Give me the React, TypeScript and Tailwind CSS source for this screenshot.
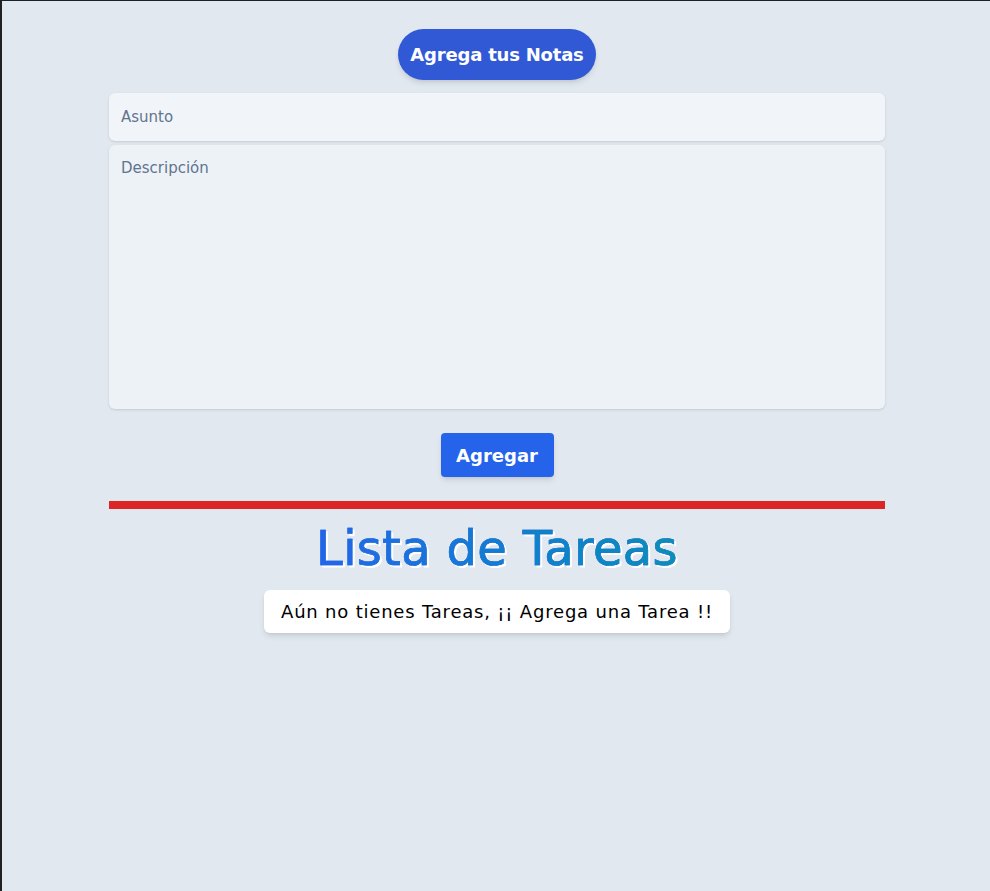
export default function App() {
  return (
    <div
      className="min-h-screen bg-[#e2e8f0] border-l-2 border-t border-[#202124] pl-[2px] flex flex-col items-center"
      style={{ fontFamily: '"DejaVu Sans", sans-serif' }}
    >
      <div className="w-[776px] flex flex-col items-center pt-[28px]">
        <h1 className="h-[51px] px-[12px] rounded-full bg-[#3159d6] text-white text-[18px] font-bold tracking-[-0.2px] flex items-center shadow-md">
          Agrega tus Notas
        </h1>

        <form className="w-full flex flex-col items-center mt-[13px]" onSubmit={(e) => e.preventDefault()}>
          <input
            type="text"
            placeholder="Asunto"
            className="w-full h-[48px] px-[12px] rounded-md bg-[#f1f5f9] shadow-sm text-[15px] text-slate-700 placeholder:text-slate-500 outline-none"
          />
          <textarea
            placeholder="Descripción"
            className="w-full h-[264px] mt-[4px] px-[12px] py-[12px] rounded-md bg-[#edf2f7] shadow-sm text-[15px] text-slate-700 placeholder:text-slate-500 outline-none resize-none"
          />
          <button
            type="submit"
            className="mt-[24px] w-[113px] h-[44px] rounded bg-[#2563eb] text-white text-[18px] font-bold shadow-md"
          >
            Agregar
          </button>
        </form>

        <div className="w-full h-[8px] bg-[#dc2626] mt-[24px]" />

        <h2
          className="mt-[9px] text-[48px] font-medium tracking-[0.3px] leading-[60px] bg-gradient-to-r from-[#2563eb] to-[#0891b2] bg-clip-text text-transparent"
          style={{ filter: 'drop-shadow(2px 2px 0 #ffffff)', WebkitTextStroke: '0.6px #1d6fd8' }}
        >
          Lista de Tareas
        </h2>

        <p className="mt-[12px] h-[43px] px-[17px] flex items-center bg-white rounded-md shadow-md text-[18px] tracking-[0.8px] text-black">
          Aún no tienes Tareas, ¡¡ Agrega una Tarea !!
        </p>
      </div>
    </div>
  );
}
